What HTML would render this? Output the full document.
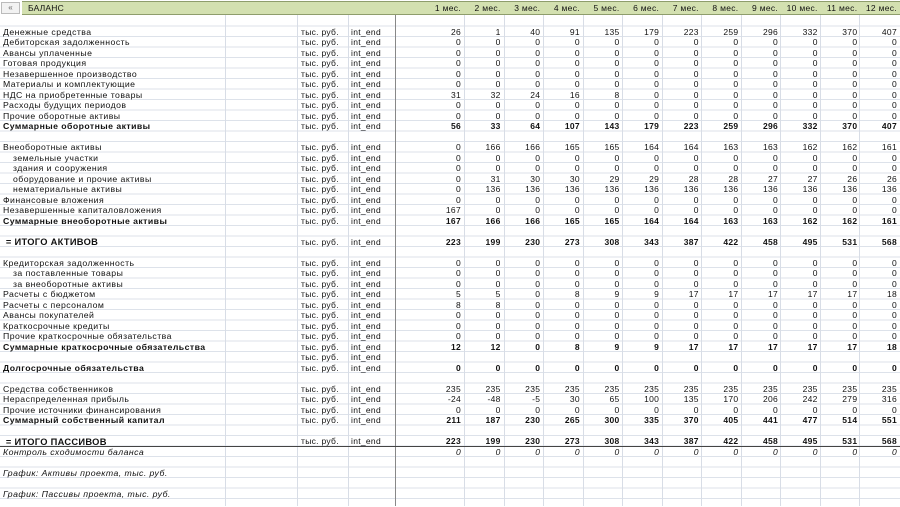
<!DOCTYPE html>
<html><head><meta charset="utf-8"><style>
*{margin:0;padding:0;box-sizing:border-box}
body{width:900px;height:506px;overflow:hidden;background:#fff;font-family:"Liberation Sans",Arial,sans-serif;font-size:8.5px;color:#111;position:relative}
.hdr{position:absolute;left:0;top:0;width:900px;height:15.5px;background:#fff}
.btn{position:absolute;left:1px;top:2px;width:19px;height:12px;background:#f2f2f2;border:1px solid #bbb;font-size:8px;text-align:center;line-height:10px;color:#666}
.grn{position:absolute;left:22px;top:1px;right:0;height:14px;background:#d3e0b0;border-top:1px solid #8e9d6c;border-bottom:1px solid #8e9d6c}
.grid{position:absolute;left:0;top:15.5px;width:900px;height:491px;background:repeating-linear-gradient(to bottom,transparent 0,transparent 9.5px,#dde2ea 9.5px,#dde2ea 10.5px)}
.v{position:absolute;top:15px;bottom:0;width:1px;background:#d8dde6}
.rows{position:absolute;left:0;top:16px;width:900px}
.r,.h{display:grid;grid-template-columns:225px 72px 51px 47px 69px repeat(11,1fr);height:10.5px;line-height:10.5px;white-space:nowrap;align-items:start;overflow:hidden}
.h{position:absolute;left:0;top:1px;width:900px;height:14px;line-height:14px;font-size:8.5px;letter-spacing:0.2px}
.r span{display:block;height:10.5px;line-height:10.5px}
.r span,.h span{overflow:hidden;padding:0 3px}
.r span:first-child{letter-spacing:0.45px;font-size:8.7px}
.r span:nth-child(3),.r span:nth-child(4){letter-spacing:0.3px}
.r span:nth-child(n+5),.h span:nth-child(n+5){text-align:right;letter-spacing:0.3px}
.r span:nth-child(3){padding-left:4px}
.b{font-weight:bold}
.t{font-weight:bold}
.t span:first-child{font-size:9.3px;letter-spacing:0.3px;padding-top:1.5px;line-height:9px}
.i{font-style:italic}
.in span:first-child{padding-left:13px}
</style></head><body>
<div class="hdr"></div>
<div class="grn"></div>
<div class="btn">«</div>
<div class="h"><span style="padding-left:28px">БАЛАНС</span><span></span><span></span><span></span><span>1 мес.</span><span>2 мес.</span><span>3 мес.</span><span>4 мес.</span><span>5 мес.</span><span>6 мес.</span><span>7 мес.</span><span>8 мес.</span><span>9 мес.</span><span>10 мес.</span><span>11 мес.</span><span>12 мес.</span></div>
<div class="grid"></div>
<div class="v" style="left:225px"></div>
<div class="v" style="left:297px"></div>
<div class="v" style="left:348px"></div>
<div class="v" style="left:395px;background:#888"></div>
<div class="v" style="left:464px"></div>
<div class="v" style="left:503.5px"></div>
<div class="v" style="left:543px"></div>
<div class="v" style="left:582.5px"></div>
<div class="v" style="left:622px"></div>
<div class="v" style="left:661.5px"></div>
<div class="v" style="left:701px"></div>
<div class="v" style="left:740.5px"></div>
<div class="v" style="left:780px"></div>
<div class="v" style="left:819.5px"></div>
<div class="v" style="left:859px"></div>
<div style="position:absolute;left:0;top:445.5px;width:900px;height:1px;background:#444"></div>
<div class="rows">
<div class="r"></div>
<div class="r"><span>Денежные средства</span><span></span><span>тыс. руб.</span><span>int_end</span><span>26</span><span>1</span><span>40</span><span>91</span><span>135</span><span>179</span><span>223</span><span>259</span><span>296</span><span>332</span><span>370</span><span>407</span></div>
<div class="r"><span>Дебиторская задолженность</span><span></span><span>тыс. руб.</span><span>int_end</span><span>0</span><span>0</span><span>0</span><span>0</span><span>0</span><span>0</span><span>0</span><span>0</span><span>0</span><span>0</span><span>0</span><span>0</span></div>
<div class="r"><span>Авансы уплаченные</span><span></span><span>тыс. руб.</span><span>int_end</span><span>0</span><span>0</span><span>0</span><span>0</span><span>0</span><span>0</span><span>0</span><span>0</span><span>0</span><span>0</span><span>0</span><span>0</span></div>
<div class="r"><span>Готовая продукция</span><span></span><span>тыс. руб.</span><span>int_end</span><span>0</span><span>0</span><span>0</span><span>0</span><span>0</span><span>0</span><span>0</span><span>0</span><span>0</span><span>0</span><span>0</span><span>0</span></div>
<div class="r"><span>Незавершенное производство</span><span></span><span>тыс. руб.</span><span>int_end</span><span>0</span><span>0</span><span>0</span><span>0</span><span>0</span><span>0</span><span>0</span><span>0</span><span>0</span><span>0</span><span>0</span><span>0</span></div>
<div class="r"><span>Материалы и комплектующие</span><span></span><span>тыс. руб.</span><span>int_end</span><span>0</span><span>0</span><span>0</span><span>0</span><span>0</span><span>0</span><span>0</span><span>0</span><span>0</span><span>0</span><span>0</span><span>0</span></div>
<div class="r"><span>НДС на приобретенные товары</span><span></span><span>тыс. руб.</span><span>int_end</span><span>31</span><span>32</span><span>24</span><span>16</span><span>8</span><span>0</span><span>0</span><span>0</span><span>0</span><span>0</span><span>0</span><span>0</span></div>
<div class="r"><span>Расходы будущих периодов</span><span></span><span>тыс. руб.</span><span>int_end</span><span>0</span><span>0</span><span>0</span><span>0</span><span>0</span><span>0</span><span>0</span><span>0</span><span>0</span><span>0</span><span>0</span><span>0</span></div>
<div class="r"><span>Прочие оборотные активы</span><span></span><span>тыс. руб.</span><span>int_end</span><span>0</span><span>0</span><span>0</span><span>0</span><span>0</span><span>0</span><span>0</span><span>0</span><span>0</span><span>0</span><span>0</span><span>0</span></div>
<div class="r b"><span>Суммарные оборотные активы</span><span></span><span style="font-weight:normal">тыс. руб.</span><span style="font-weight:normal">int_end</span><span>56</span><span>33</span><span>64</span><span>107</span><span>143</span><span>179</span><span>223</span><span>259</span><span>296</span><span>332</span><span>370</span><span>407</span></div>
<div class="r"></div>
<div class="r"><span>Внеоборотные активы</span><span></span><span>тыс. руб.</span><span>int_end</span><span>0</span><span>166</span><span>166</span><span>165</span><span>165</span><span>164</span><span>164</span><span>163</span><span>163</span><span>162</span><span>162</span><span>161</span></div>
<div class="r in"><span>земельные участки</span><span></span><span>тыс. руб.</span><span>int_end</span><span>0</span><span>0</span><span>0</span><span>0</span><span>0</span><span>0</span><span>0</span><span>0</span><span>0</span><span>0</span><span>0</span><span>0</span></div>
<div class="r in"><span>здания и сооружения</span><span></span><span>тыс. руб.</span><span>int_end</span><span>0</span><span>0</span><span>0</span><span>0</span><span>0</span><span>0</span><span>0</span><span>0</span><span>0</span><span>0</span><span>0</span><span>0</span></div>
<div class="r in"><span>оборудование и прочие активы</span><span></span><span>тыс. руб.</span><span>int_end</span><span>0</span><span>31</span><span>30</span><span>30</span><span>29</span><span>29</span><span>28</span><span>28</span><span>27</span><span>27</span><span>26</span><span>26</span></div>
<div class="r in"><span>нематериальные активы</span><span></span><span>тыс. руб.</span><span>int_end</span><span>0</span><span>136</span><span>136</span><span>136</span><span>136</span><span>136</span><span>136</span><span>136</span><span>136</span><span>136</span><span>136</span><span>136</span></div>
<div class="r"><span>Финансовые вложения</span><span></span><span>тыс. руб.</span><span>int_end</span><span>0</span><span>0</span><span>0</span><span>0</span><span>0</span><span>0</span><span>0</span><span>0</span><span>0</span><span>0</span><span>0</span><span>0</span></div>
<div class="r"><span>Незавершенные капиталовложения</span><span></span><span>тыс. руб.</span><span>int_end</span><span>167</span><span>0</span><span>0</span><span>0</span><span>0</span><span>0</span><span>0</span><span>0</span><span>0</span><span>0</span><span>0</span><span>0</span></div>
<div class="r b"><span>Суммарные внеоборотные активы</span><span></span><span style="font-weight:normal">тыс. руб.</span><span style="font-weight:normal">int_end</span><span>167</span><span>166</span><span>166</span><span>165</span><span>165</span><span>164</span><span>164</span><span>163</span><span>163</span><span>162</span><span>162</span><span>161</span></div>
<div class="r"></div>
<div class="r t"><span>&nbsp;= ИТОГО АКТИВОВ</span><span></span><span style="font-weight:normal">тыс. руб.</span><span style="font-weight:normal">int_end</span><span>223</span><span>199</span><span>230</span><span>273</span><span>308</span><span>343</span><span>387</span><span>422</span><span>458</span><span>495</span><span>531</span><span>568</span></div>
<div class="r"></div>
<div class="r"><span>Кредиторская задолженность</span><span></span><span>тыс. руб.</span><span>int_end</span><span>0</span><span>0</span><span>0</span><span>0</span><span>0</span><span>0</span><span>0</span><span>0</span><span>0</span><span>0</span><span>0</span><span>0</span></div>
<div class="r in"><span>за поставленные товары</span><span></span><span>тыс. руб.</span><span>int_end</span><span>0</span><span>0</span><span>0</span><span>0</span><span>0</span><span>0</span><span>0</span><span>0</span><span>0</span><span>0</span><span>0</span><span>0</span></div>
<div class="r in"><span>за внеоборотные активы</span><span></span><span>тыс. руб.</span><span>int_end</span><span>0</span><span>0</span><span>0</span><span>0</span><span>0</span><span>0</span><span>0</span><span>0</span><span>0</span><span>0</span><span>0</span><span>0</span></div>
<div class="r"><span>Расчеты с бюджетом</span><span></span><span>тыс. руб.</span><span>int_end</span><span>5</span><span>5</span><span>0</span><span>8</span><span>9</span><span>9</span><span>17</span><span>17</span><span>17</span><span>17</span><span>17</span><span>18</span></div>
<div class="r"><span>Расчеты с персоналом</span><span></span><span>тыс. руб.</span><span>int_end</span><span>8</span><span>8</span><span>0</span><span>0</span><span>0</span><span>0</span><span>0</span><span>0</span><span>0</span><span>0</span><span>0</span><span>0</span></div>
<div class="r"><span>Авансы покупателей</span><span></span><span>тыс. руб.</span><span>int_end</span><span>0</span><span>0</span><span>0</span><span>0</span><span>0</span><span>0</span><span>0</span><span>0</span><span>0</span><span>0</span><span>0</span><span>0</span></div>
<div class="r"><span>Краткосрочные кредиты</span><span></span><span>тыс. руб.</span><span>int_end</span><span>0</span><span>0</span><span>0</span><span>0</span><span>0</span><span>0</span><span>0</span><span>0</span><span>0</span><span>0</span><span>0</span><span>0</span></div>
<div class="r"><span>Прочие краткосрочные обязательства</span><span></span><span>тыс. руб.</span><span>int_end</span><span>0</span><span>0</span><span>0</span><span>0</span><span>0</span><span>0</span><span>0</span><span>0</span><span>0</span><span>0</span><span>0</span><span>0</span></div>
<div class="r b"><span>Суммарные краткосрочные обязательства</span><span></span><span style="font-weight:normal">тыс. руб.</span><span style="font-weight:normal">int_end</span><span>12</span><span>12</span><span>0</span><span>8</span><span>9</span><span>9</span><span>17</span><span>17</span><span>17</span><span>17</span><span>17</span><span>18</span></div>
<div class="r"><span></span><span></span><span>тыс. руб.</span><span>int_end</span></div>
<div class="r b"><span>Долгосрочные обязательства</span><span></span><span style="font-weight:normal">тыс. руб.</span><span style="font-weight:normal">int_end</span><span>0</span><span>0</span><span>0</span><span>0</span><span>0</span><span>0</span><span>0</span><span>0</span><span>0</span><span>0</span><span>0</span><span>0</span></div>
<div class="r"></div>
<div class="r"><span>Средства собственников</span><span></span><span>тыс. руб.</span><span>int_end</span><span>235</span><span>235</span><span>235</span><span>235</span><span>235</span><span>235</span><span>235</span><span>235</span><span>235</span><span>235</span><span>235</span><span>235</span></div>
<div class="r"><span>Нераспределенная прибыль</span><span></span><span>тыс. руб.</span><span>int_end</span><span>-24</span><span>-48</span><span>-5</span><span>30</span><span>65</span><span>100</span><span>135</span><span>170</span><span>206</span><span>242</span><span>279</span><span>316</span></div>
<div class="r"><span>Прочие источники финансирования</span><span></span><span>тыс. руб.</span><span>int_end</span><span>0</span><span>0</span><span>0</span><span>0</span><span>0</span><span>0</span><span>0</span><span>0</span><span>0</span><span>0</span><span>0</span><span>0</span></div>
<div class="r b"><span>Суммарный собственный капитал</span><span></span><span style="font-weight:normal">тыс. руб.</span><span style="font-weight:normal">int_end</span><span>211</span><span>187</span><span>230</span><span>265</span><span>300</span><span>335</span><span>370</span><span>405</span><span>441</span><span>477</span><span>514</span><span>551</span></div>
<div class="r"></div>
<div class="r t"><span>&nbsp;= ИТОГО ПАССИВОВ</span><span></span><span style="font-weight:normal">тыс. руб.</span><span style="font-weight:normal">int_end</span><span>223</span><span>199</span><span>230</span><span>273</span><span>308</span><span>343</span><span>387</span><span>422</span><span>458</span><span>495</span><span>531</span><span>568</span></div>
<div class="r i"><span>Контроль сходимости баланса</span><span></span><span></span><span></span><span>0</span><span>0</span><span>0</span><span>0</span><span>0</span><span>0</span><span>0</span><span>0</span><span>0</span><span>0</span><span>0</span><span>0</span></div>
<div class="r"></div>
<div class="r i"><span>График: Активы проекта, тыс. руб.</span></div>
<div class="r"></div>
<div class="r i"><span>График: Пассивы проекта, тыс. руб.</span></div>
</div>
</body></html>
